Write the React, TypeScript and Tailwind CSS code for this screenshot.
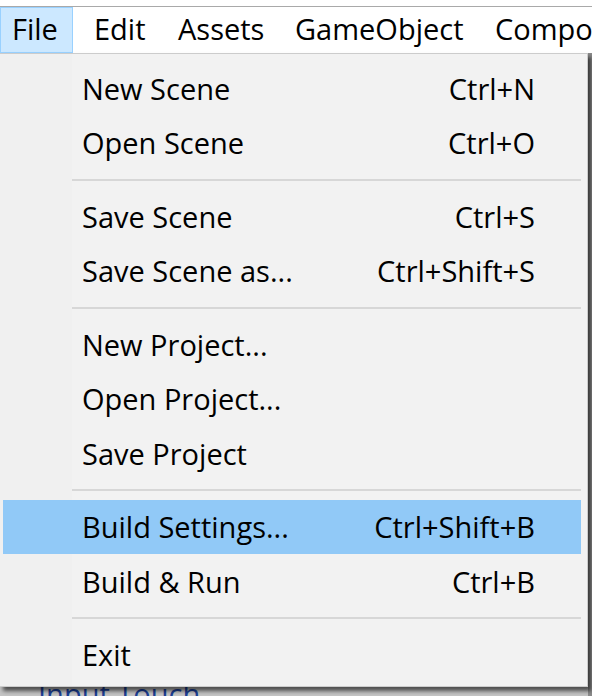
const font = { fontFamily: '"Open Sans", "Noto Sans", sans-serif' };

type Item = { label: string; shortcut?: string; active?: boolean } | "sep";

const items: Item[] = [
  { label: "New Scene", shortcut: "Ctrl+N" },
  { label: "Open Scene", shortcut: "Ctrl+O" },
  "sep",
  { label: "Save Scene", shortcut: "Ctrl+S" },
  { label: "Save Scene as...", shortcut: "Ctrl+Shift+S" },
  "sep",
  { label: "New Project..." },
  { label: "Open Project..." },
  { label: "Save Project" },
  "sep",
  { label: "Build Settings...", shortcut: "Ctrl+Shift+B", active: true },
  { label: "Build & Run", shortcut: "Ctrl+B" },
  "sep",
  { label: "Exit" },
];

const menus = [
  { name: "File", w: "w-[73px] pl-[11px]", active: true },
  { name: "Edit", w: "w-[86px] pl-[20px]" },
  { name: "Assets", w: "w-[117px] pl-[18px]" },
  { name: "GameObject", w: "w-[200px] pl-[18px]" },
  { name: "Component", w: "w-[200px] pl-[18px]" },
];

export default function App() {
  return (
    <div className="relative w-[592px] h-[696px] overflow-hidden bg-[#cfcfcf] text-black" style={font}>
      {/* window top */}
      <div className="h-[6px] bg-white" />

      {/* menu bar */}
      <div className="flex h-[47px] border-t border-[#a9a9a9] bg-white whitespace-nowrap">
        {menus.map((m) => (
          <div
            key={m.name}
            className={`${m.w} shrink-0 flex items-center pb-[3px] text-[29px] leading-none ${
              m.active ? "bg-[#cce8ff] border border-[#99d1ff]" : "border border-transparent"
            }`}
          >
            {m.name}
          </div>
        ))}
      </div>

      {/* editor content behind the dropdown */}
      <div className="flex h-[643px] bg-[#c4c4c4]">
        <div className="flex-1 pl-[38px] pt-[626px]">
          <span className="text-[29px] leading-none text-[#1b3f96]">Input Touch</span>
        </div>
        <div className="w-[4px] bg-[#8a8a8a]" />
      </div>

      {/* dropdown */}
      <div className="absolute left-0 top-[53px] w-[588px] h-[634px] bg-[#f2f2f2] border border-l-0 border-[#cccccc] pl-[3px] pr-[6px] pt-[7px] shadow-[3px_4px_4px_rgba(0,0,0,0.6)]">
        <div className="absolute left-0 top-0 bottom-0 w-[72px] bg-[#f0f0f0]" />
        <div className="relative">
          {items.map((it, i) =>
            it === "sep" ? (
              <div key={i} className="h-[19px] flex items-center pl-[69px]">
                <div className="h-[2px] w-full bg-[#d7d7d7]" />
              </div>
            ) : (
              <div
                key={i}
                className={`h-[54.5px] flex items-center justify-between pl-[79px] pr-[46px] text-[29px] leading-none ${
                  it.active ? "bg-[#91c9f7]" : ""
                }`}
              >
                <span>{it.label}</span>
                {it.shortcut && <span>{it.shortcut}</span>}
              </div>
            )
          )}
        </div>
      </div>
    </div>
  );
}
